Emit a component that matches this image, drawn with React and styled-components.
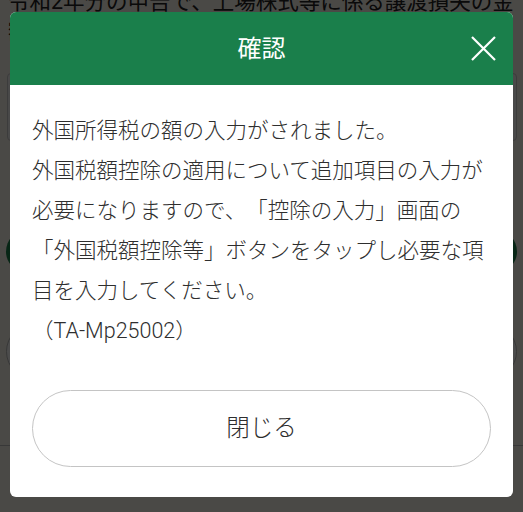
import React from "react";
import styled, { createGlobalStyle } from "styled-components";

const GlobalStyle = createGlobalStyle`
  html, body {
    margin: 0;
    padding: 0;
    overflow: hidden;
  }
  body {
    font-family: "Roboto", "Noto Sans CJK JP", "Noto Sans", sans-serif;
    text-spacing-trim: space-all;
  }
  * { box-sizing: border-box; }
`;

const Page = styled.div`
  width: 523px;
  height: 512px;
  overflow: hidden;
  background: #f8f4ea;
  padding: 0 6px;
  color: #222;
`;

const PageHeading = styled.h1`
  margin: -13px 0 0;
  padding-left: 2px;
  font-size: 21.5px;
  font-weight: 400;
  line-height: 30px;
  white-space: nowrap;
`;

const InfoBox = styled.div`
  margin: 26px 0 0 1px;
  height: 68px;
  border: 1px solid #c8c8c8;
  border-radius: 4px;
  background: #f4f4f4;
`;

const Pill = styled.div`
  margin-top: ${(p) => p.$gap}px;
  height: ${(p) => p.$h}px;
  border-radius: ${(p) => p.$h / 2}px;
  background: ${(p) => (p.$primary ? "#1a7f4b" : "#ffffff")};
  border: ${(p) => (p.$primary ? "none" : "1px solid #b8b8b8")};
`;

const Divider = styled.hr`
  margin: 65px -6px 0;
  border: none;
  border-top: 1px solid #bdbdbd;
`;

const Overlay = styled.div`
  position: fixed;
  inset: 0;
  background: rgba(0, 0, 0, 0.7);
  display: flex;
  align-items: flex-start;
  justify-content: center;
  padding: 12px 8px 0;
`;

const Dialog = styled.div`
  width: 503px;
  background: #ffffff;
  border-radius: 6px;
  overflow: hidden;
`;

const Header = styled.div`
  height: 73px;
  background: #1a7f4b;
  display: grid;
  grid-template-columns: 1fr auto 1fr;
  align-items: center;
`;

const Title = styled.h2`
  grid-column: 2;
  margin: 0;
  color: #ffffff;
  font-size: 24px;
  font-weight: 400;
  line-height: 1;
`;

const CloseButton = styled.button`
  grid-column: 3;
  justify-self: end;
  margin-right: 17px;
  width: 25px;
  height: 25px;
  padding: 0;
  border: none;
  background: transparent;
  display: flex;
  cursor: pointer;
`;

const Body = styled.div`
  padding: 26px 22px 30px;
`;

const Message = styled.div`
  color: #2e2e2e;
  font-size: 21.5px;
  font-weight: 300;
  line-height: 40px;
  white-space: nowrap;
`;

const Line = styled.p`
  margin: 0;
`;

const CloseAction = styled.button`
  display: block;
  width: 100%;
  height: 77px;
  margin-top: 39px;
  padding: 0 0 5px;
  border: 1px solid #c4c4c4;
  border-radius: 39px;
  background: #ffffff;
  color: #2e2e2e;
  font-family: inherit;
  font-size: 23.5px;
  font-weight: 300;
  cursor: pointer;
`;

export default function App() {
  return (
    <>
      <GlobalStyle />
      <Page>
        <PageHeading>
          令和2年分の申告で、上場株式等に係る譲渡損失の金
          <br />
          額
        </PageHeading>
        <InfoBox />
        <Pill $primary $gap={89} $h={43} />
        <Pill $gap={50} $h={57} />
        <Divider />
      </Page>
      <Overlay>
        <Dialog role="dialog" aria-label="確認">
          <Header>
            <Title>確認</Title>
            <CloseButton aria-label="閉じる">
              <svg width="25" height="25" viewBox="0 0 25 25">
                <path
                  d="M1 1 L24 24 M24 1 L1 24"
                  stroke="#ffffff"
                  strokeWidth="2.2"
                  fill="none"
                />
              </svg>
            </CloseButton>
          </Header>
          <Body>
            <Message>
              <Line>外国所得税の額の入力がされました。</Line>
              <Line>
                外国税額控除の適用について追加項目の入力が
                <br />
                必要になりますので、「控除の入力」画面の
                <br />
                「外国税額控除等」ボタンをタップし必要な項
                <br />
                目を入力してください。
              </Line>
              <Line>（TA-Mp25002）</Line>
            </Message>
            <CloseAction>閉じる</CloseAction>
          </Body>
        </Dialog>
      </Overlay>
    </>
  );
}
